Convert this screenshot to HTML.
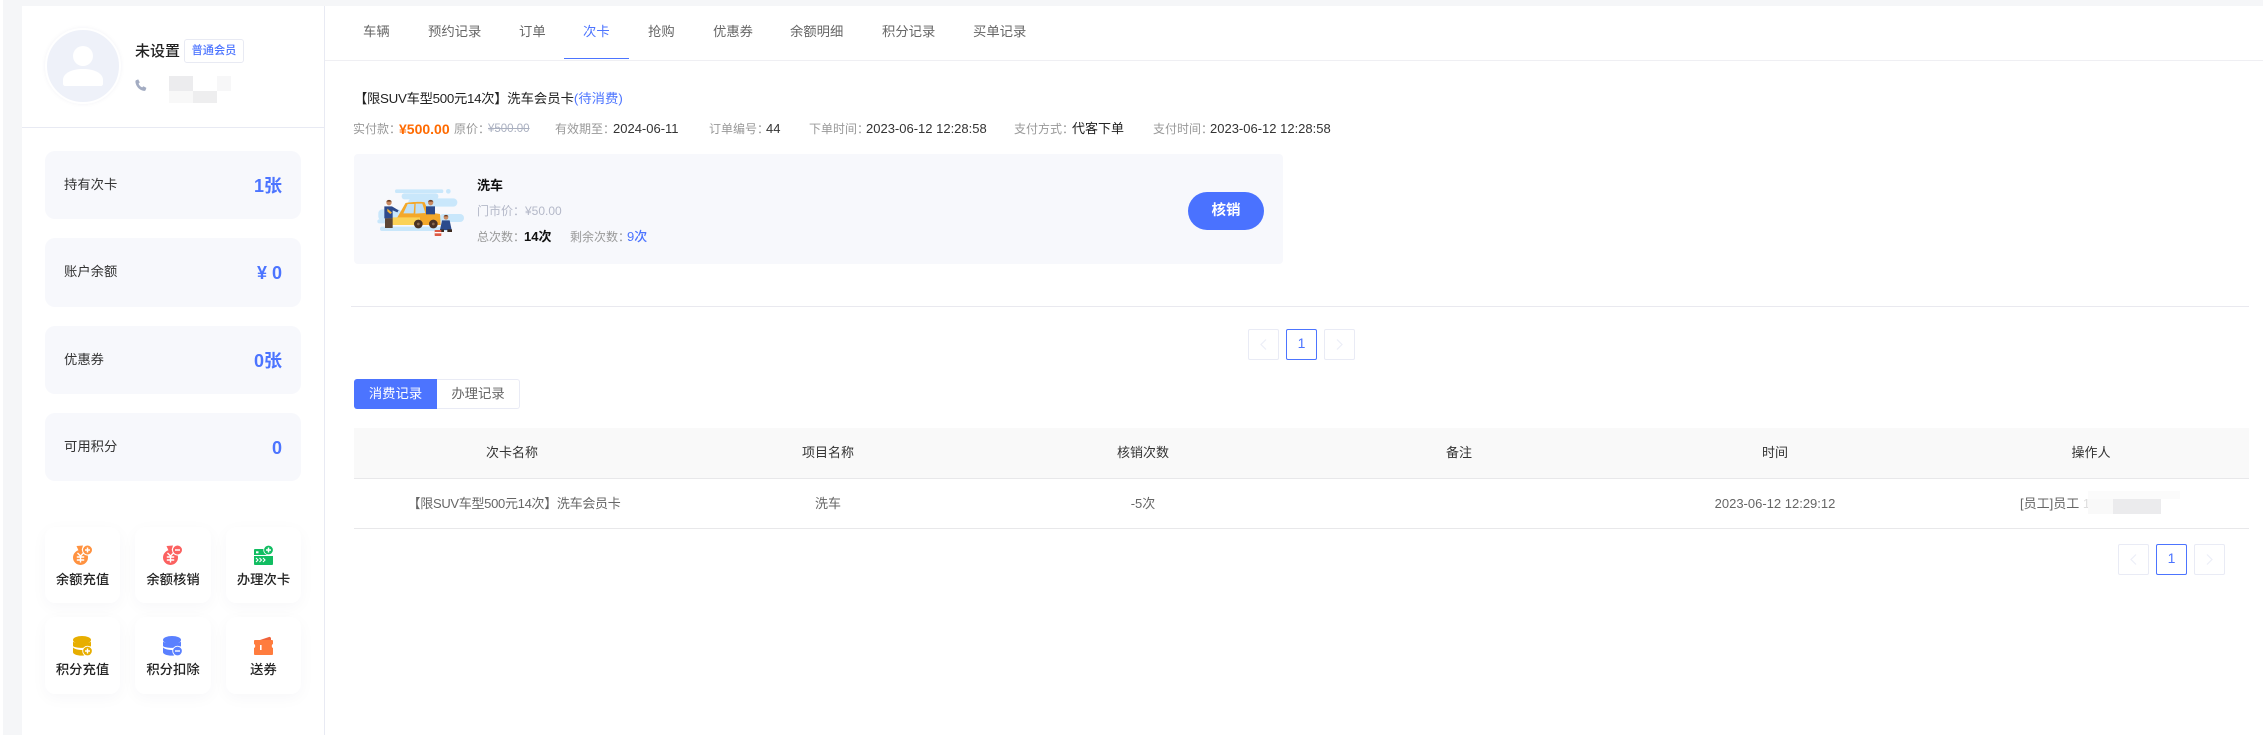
<!DOCTYPE html>
<html lang="zh">
<head>
<meta charset="utf-8">
<title>会员详情</title>
<style>
html,body{margin:0;padding:0;background:#fff}
body{width:2263px;height:735px;position:relative;overflow:hidden;font-family:"Liberation Sans","Noto Sans CJK SC",sans-serif;color:#333;font-size:13.33px}
.a{position:absolute}
.t{position:absolute;white-space:nowrap;line-height:20px;height:20px}
.stat{position:absolute;left:45px;width:256px;height:68px;background:#f7f8fc;border-radius:10px}
.stat .l{position:absolute;left:19px;top:24px;line-height:20px;color:#333;font-size:13.33px}
.stat .v{position:absolute;right:19px;top:23px;line-height:24px;color:#4c74ff;font-size:18px;font-weight:700}
.btn{position:absolute;width:75px;height:76px;background:#fff;border-radius:10px;box-shadow:0 4px 16px rgba(30,40,90,.035)}
.btn svg{position:absolute;left:28px;top:18px}
.btn.r2 svg{top:19px}
.btn div{position:absolute;left:0;right:0;top:43px;text-align:center;font-size:13.33px;line-height:20px;font-weight:500;color:#222}
.tab{position:absolute;top:22px;line-height:20px;color:#666;font-size:13.33px;white-space:nowrap}
.g{color:#999;font-size:12px}
.d{color:#333;font-size:13px}
.pg{position:absolute;width:29px;height:29px;border:1px solid #e9ebf5;border-radius:2px;background:#fff;text-align:center;line-height:26px;font-size:14px;color:#4c74ff}
.pg.on{border-color:#4c74ff}
.pg svg{position:absolute;left:9px;top:8px}
.th{position:absolute;top:443px;width:316px;text-align:center;line-height:20px;color:#333;font-size:13px;white-space:nowrap}
.td{position:absolute;top:494px;width:316px;text-align:center;line-height:20px;color:#666;font-size:13px;white-space:nowrap}
</style>
</head>
<body>
<!-- page background -->
<div class="a" style="left:3px;top:0;width:2260px;height:6px;background:#f5f6f8"></div>
<div class="a" style="left:3px;top:0;width:19px;height:735px;background:#f5f6f8"></div>
<div class="a" style="left:324px;top:6px;width:1px;height:729px;background:#e8eaf3"></div>

<!-- profile -->
<div class="a" style="left:45px;top:28px;width:72px;height:72px;border-radius:50%;background:#eef1f9;border:2px solid #fff;box-shadow:0 0 5px rgba(30,40,90,.05)"></div>
<svg class="a" style="left:47px;top:30px" width="76" height="76" viewBox="0 0 76 76"><circle cx="36" cy="26" r="10" fill="#fff"/><path d="M16 54v-4c0-7 9-11 20-11s20 4 20 11v4c0 1-1 2-2 2H18c-1 0-2-1-2-2z" fill="#fff"/></svg>
<div class="t" style="left:135px;top:42px;font-size:15px;color:#222;font-weight:500">未设置</div>
<div class="a" style="left:184px;top:39px;width:58px;height:22px;border:1px solid #e8eaf3;border-radius:3px;text-align:center;line-height:22px;font-size:11.2px;color:#4c74ff;font-weight:500">普通会员</div>
<svg class="a" style="left:135px;top:79px" width="12" height="12" viewBox="0 0 12 12"><path d="M1 1.200 3.200.4 4.800 3.400 3.600 4.600c.6 1.700 1.800 3 3.600 3.800L8.400 7.300l3 1.600-.8 2.200c-.3.6-1 .9-1.700.8C4.500 11.300 1 7.600.4 3c0-.8.200-1.500.6-1.800z" fill="#a3acc2"/></svg>
<div class="a" style="left:169px;top:76px;width:24px;height:15px;background:#ececee"></div>
<div class="a" style="left:217px;top:76px;width:14px;height:15px;background:#f7f7f8"></div>
<div class="a" style="left:169px;top:91px;width:24px;height:12px;background:#f8f8f8"></div>
<div class="a" style="left:193px;top:91px;width:24px;height:12px;background:#eeeeef"></div>
<div class="a" style="left:22px;top:127px;width:302px;height:1px;background:#e8eaf3"></div>

<!-- stats -->
<div class="stat" style="top:151px"><div class="l">持有次卡</div><div class="v">1张</div></div>
<div class="stat" style="top:238px;height:69px"><div class="l">账户余额</div><div class="v">¥ 0</div></div>
<div class="stat" style="top:326px"><div class="l">优惠券</div><div class="v">0张</div></div>
<div class="stat" style="top:413px"><div class="l">可用积分</div><div class="v">0</div></div>

<!-- actions -->
<div class="btn" style="left:45px;top:527px"><svg width="20" height="20" viewBox="0 0 20 20"><path d="M3.500 1 10 .5 8.500 5.500H5.500z" fill="#ff9240"/><circle cx="7.500" cy="12.500" r="7.500" fill="#ff9240"/><path d="M4.500 8 7.500 11 10.500 8M3.800 12h7.400M3.800 15h7.400M7.500 11v6.500" stroke="#fff" stroke-width="1.400" fill="none"/><circle cx="14.500" cy="5" r="5" fill="#ff9240" stroke="#fff" stroke-width="1"/><path d="M12 5h5M14.500 2.500v5" stroke="#fff" stroke-width="1.500"/></svg><div>余额充值</div></div>
<div class="btn" style="left:135px;top:527px;width:76px"><svg width="20" height="20" viewBox="0 0 20 20"><path d="M3.500 1 10 .5 8.500 5.500H5.500z" fill="#fb6160"/><circle cx="7.500" cy="12.500" r="7.500" fill="#fb6160"/><path d="M4.500 8 7.500 11 10.500 8M3.800 12h7.400M3.800 15h7.400M7.500 11v6.500" stroke="#fff" stroke-width="1.400" fill="none"/><circle cx="14.500" cy="5" r="5" fill="#fb6160" stroke="#fff" stroke-width="1"/><path d="M12 5h5" stroke="#fff" stroke-width="1.500"/></svg><div>余额核销</div></div>
<div class="btn" style="left:226px;top:527px"><svg width="20" height="20" viewBox="0 0 20 20"><path d="M1 4h12v6H0V5c0-.6.400-1 1-1z" fill="#11bd61"/><rect x="2" y="6.300" width="2.500" height="2" fill="#fff"/><path d="M0 11h19v8c0 .6-.400 1-1 1H1c-.6 0-1-.4-1-1z" fill="#11bd61"/><path d="M2 13l2 2-2 2M5.500 13l2 2-2 2M9 13l2 2-2 2" stroke="#fff" stroke-width="1.100" fill="none"/><circle cx="14.500" cy="5" r="4.800" fill="#11bd61" stroke="#fff" stroke-width=".8"/><path d="M12 5h5M14.500 2.500v5" stroke="#fff" stroke-width="1.500"/></svg><div>办理次卡</div></div>
<div class="btn r2" style="left:45px;top:617px;height:77px"><svg width="20" height="20" viewBox="0 0 20 20"><ellipse cx="9" cy="4" rx="9" ry="4" fill="#e7ae00"/><path d="M0 5.500C2 8 16 8 18 5.500V10c-2 2.500-16 2.500-18 0z" fill="#e7ae00"/><path d="M0 11.500C2 14 12 14.500 13 14L11 19.500C6 20 1 19 0 16.500z" fill="#e7ae00"/><circle cx="14.500" cy="15" r="4.800" fill="#e7ae00" stroke="#fff" stroke-width=".9"/><path d="M12 15h5M14.500 12.500v5" stroke="#fff" stroke-width="1.400"/></svg><div>积分充值</div></div>
<div class="btn r2" style="left:135px;top:617px;width:76px;height:77px"><svg width="20" height="20" viewBox="0 0 20 20"><ellipse cx="9" cy="4" rx="9" ry="4" fill="#5a80ff"/><path d="M0 5.500C2 8 16 8 18 5.500V10c-2 2.500-16 2.500-18 0z" fill="#5a80ff"/><path d="M0 11.500C2 14 12 14.500 13 14L11 19.500C6 20 1 19 0 16.500z" fill="#5a80ff"/><circle cx="14.500" cy="15" r="4.800" fill="#5a80ff" stroke="#fff" stroke-width=".9"/><path d="M12 15h5" stroke="#fff" stroke-width="1.400"/></svg><div>积分扣除</div></div>
<div class="btn r2" style="left:226px;top:617px;height:77px"><svg width="20" height="20" viewBox="0 0 20 20"><path d="M6 4 15 1c1-.3 2 .5 2 1.500V4z" fill="#f0633a"/><path d="M1 4h17c.6 0 1 .4 1 1v3c-.8.300-1.200 1-1.200 2s.4 1.700 1.200 2v6c0 .6-.4 1-1 1H1c-.6 0-1-.4-1-1v-6c.8-.3 1.200-1 1.200-2S.8 8.300 0 8V5c0-.6.400-1 1-1z" fill="#ff7c3e"/><rect x="6" y="9" width="1.600" height="5" fill="#fff"/></svg><div>送券</div></div>

<!-- tabs -->
<div class="tab" style="left:363px">车辆</div>
<div class="tab" style="left:428px">预约记录</div>
<div class="tab" style="left:519px">订单</div>
<div class="tab" style="left:583px;color:#4c74ff">次卡</div>
<div class="tab" style="left:648px">抢购</div>
<div class="tab" style="left:713px">优惠券</div>
<div class="tab" style="left:790px">余额明细</div>
<div class="tab" style="left:882px">积分记录</div>
<div class="tab" style="left:973px">买单记录</div>
<div class="a" style="left:325px;top:60px;width:1938px;height:1px;background:#efeff3"></div>
<div class="a" style="left:564px;top:58px;width:65px;height:1px;background:#4c74ff"></div>

<!-- order head -->
<div class="t" style="left:354px;top:89px;color:#222;font-size:13.33px"><span style="letter-spacing:-.3px">【限SUV车型500元14次】</span>洗车会员卡<span style="color:#4c74ff">(待消费)</span></div>
<div class="t g" style="left:353px;top:119px">实付款：</div>
<div class="t" style="left:399px;top:119px;color:#ff6a00;font-size:14px;font-weight:700">¥500.00</div>
<div class="t g" style="left:454px;top:119px">原价：</div>
<div class="t g" style="left:488px;top:119px;font-size:11.5px;color:#aab0c0;text-decoration:line-through">¥500.00</div>
<div class="t g" style="left:555px;top:119px">有效期至：</div>
<div class="t d" style="left:613px;top:119px">2024-06-11</div>
<div class="t g" style="left:709px;top:119px">订单编号：</div>
<div class="t d" style="left:766px;top:119px">44</div>
<div class="t g" style="left:809px;top:119px">下单时间：</div>
<div class="t d" style="left:866px;top:119px">2023-06-12 12:28:58</div>
<div class="t g" style="left:1014px;top:119px">支付方式：</div>
<div class="t d" style="left:1072px;top:119px;color:#222">代客下单</div>
<div class="t g" style="left:1153px;top:119px">支付时间：</div>
<div class="t d" style="left:1210px;top:119px">2023-06-12 12:28:58</div>

<!-- card -->
<div class="a" style="left:354px;top:154px;width:929px;height:110px;background:#f7f8fc;border-radius:4px"></div>
<svg class="a" style="left:360px;top:160px" width="120" height="90" viewBox="0 0 360 270">
<g fill="#c9e7fb"><rect x="105" y="88" width="145" height="11" rx="5"/><circle cx="265" cy="94" r="7"/><rect x="125" y="100" width="110" height="18" rx="8"/><rect x="145" y="115" width="147" height="25" rx="12"/><rect x="55" y="148" width="70" height="34" rx="12"/><rect x="238" y="162" width="74" height="24" rx="12"/><rect x="52" y="178" width="60" height="12" rx="6"/><rect x="60" y="200" width="205" height="13" rx="6"/></g>
<path d="M112 172 136 130c2-3 48-6 58-3l12 30 34 5 2 33H84c-6-8-4-20 28-23z" fill="#f4a82a"/>
<path d="M84 172h96v23H84z" fill="#fbd257"/>
<path d="M130 160 143 132h20l-2 28zM167 131h20l9 28-30 2z" fill="#bfe0f7"/>
<circle cx="175" cy="192" r="13" fill="#4a3224"/><circle cx="220" cy="192" r="13" fill="#4a3224"/><circle cx="175" cy="192" r="4" fill="#8a6a50"/><circle cx="220" cy="192" r="4" fill="#8a6a50"/>
<circle cx="87" cy="128" r="8" fill="#c98a62"/><path d="M79 125c2-7 14-7 16 0z" fill="#6e3d22"/><path d="M73 139h23l20 12-4 6-14-6v24H73z" fill="#2c4a8c"/><path d="M82 146 96 158l-5 4-9-8z" fill="#f7b531"/><path d="M75 175h23v29H75z" fill="#5b4636"/>
<circle cx="212" cy="128" r="8" fill="#c98a62"/><path d="M204 125c2-7 14-7 16 0z" fill="#6e3d22"/><path d="M198 139h27v24h-27z" fill="#2c4a8c"/>
<circle cx="258" cy="172" r="7" fill="#c98a62"/><path d="M251 169c2-6 12-6 14 0z" fill="#6e3d22"/><path d="M246 181h23l6 29h-35z" fill="#2c4a8c"/><path d="M240 208h12v8h-12zM262 208h14v8h-14z" fill="#3c2a20"/>
<rect x="224" y="210" width="20" height="18" rx="2" fill="#dd5a44"/><rect x="224" y="216" width="20" height="4" fill="#fff"/>
</svg>
<div class="t" style="left:477px;top:176px;font-size:13px;font-weight:700;color:#111">洗车</div>
<div class="t" style="left:477px;top:201px;font-size:12px;color:#b4b8c8">门市价：¥50.00</div>
<div class="t g" style="left:477px;top:227px">总次数：</div>
<div class="t" style="left:524px;top:227px;font-size:13px;font-weight:700;color:#111">14次</div>
<div class="t g" style="left:570px;top:227px">剩余次数：</div>
<div class="t" style="left:627px;top:227px;font-size:13px;font-weight:500;color:#4c74ff">9次</div>
<div class="a" style="left:1188px;top:192px;width:76px;height:38px;border-radius:19px;background:#4a72ff;color:#fff;text-align:center;line-height:38px;font-size:14.5px;font-weight:700">核销</div>

<div class="a" style="left:351px;top:306px;width:1898px;height:1px;background:#e9e9ef"></div>

<!-- pager 1 -->
<div class="pg" style="left:1248px;top:329px"><svg width="11" height="13" viewBox="0 0 11 13"><path d="M8 1.500 3 6.500 8 11.500" stroke="#eceef7" stroke-width="1.200" fill="none"/></svg></div>
<div class="pg on" style="left:1286px;top:329px">1</div>
<div class="pg" style="left:1324px;top:329px"><svg width="11" height="13" viewBox="0 0 11 13"><path d="M3 1.500 8 6.500 3 11.500" stroke="#eceef7" stroke-width="1.200" fill="none"/></svg></div>

<!-- sub tabs -->
<div class="a" style="left:354px;top:379px;width:83px;height:30px;background:#4c74ff;border-radius:3px 0 0 3px;color:#fff;text-align:center;line-height:30px;font-size:13.33px">消费记录</div>
<div class="a" style="left:437px;top:379px;width:82px;height:28px;border:1px solid #e9ebf5;border-left:0;border-radius:0 3px 3px 0;color:#666;text-align:center;line-height:28px;font-size:13.33px">办理记录</div>

<!-- table -->
<div class="a" style="left:354px;top:428px;width:1895px;height:50px;background:#f9f9f9"></div>
<div class="a" style="left:354px;top:478px;width:1895px;height:1px;background:#e8e8ea"></div>
<div class="a" style="left:354px;top:528px;width:1895px;height:1px;background:#e8e8ea"></div>
<div class="th" style="left:354px">次卡名称</div>
<div class="th" style="left:670px">项目名称</div>
<div class="th" style="left:985px">核销次数</div>
<div class="th" style="left:1301px">备注</div>
<div class="th" style="left:1617px">时间</div>
<div class="th" style="left:1933px">操作人</div>
<div class="td" style="left:356px;letter-spacing:-.3px">【限SUV车型500元14次】洗车会员卡</div>
<div class="td" style="left:670px">洗车</div>
<div class="td" style="left:985px">-5次</div>
<div class="td" style="left:1617px">2023-06-12 12:29:12</div>
<div class="t" style="left:2020px;top:494px;color:#666;font-size:13px">[员工]员工 <span style="color:#ddd">1</span></div>
<div class="a" style="left:2088px;top:491px;width:92px;height:8px;background:#fbfbfb"></div>
<div class="a" style="left:2088px;top:499px;width:25px;height:15px;background:#f9f9f9"></div>
<div class="a" style="left:2113px;top:499px;width:48px;height:15px;background:#ebebed"></div>

<!-- pager 2 -->
<div class="pg" style="left:2118px;top:544px"><svg width="11" height="13" viewBox="0 0 11 13"><path d="M8 1.500 3 6.500 8 11.500" stroke="#eceef7" stroke-width="1.200" fill="none"/></svg></div>
<div class="pg on" style="left:2156px;top:544px">1</div>
<div class="pg" style="left:2194px;top:544px"><svg width="11" height="13" viewBox="0 0 11 13"><path d="M3 1.500 8 6.500 3 11.500" stroke="#eceef7" stroke-width="1.200" fill="none"/></svg></div>
</body>
</html>
